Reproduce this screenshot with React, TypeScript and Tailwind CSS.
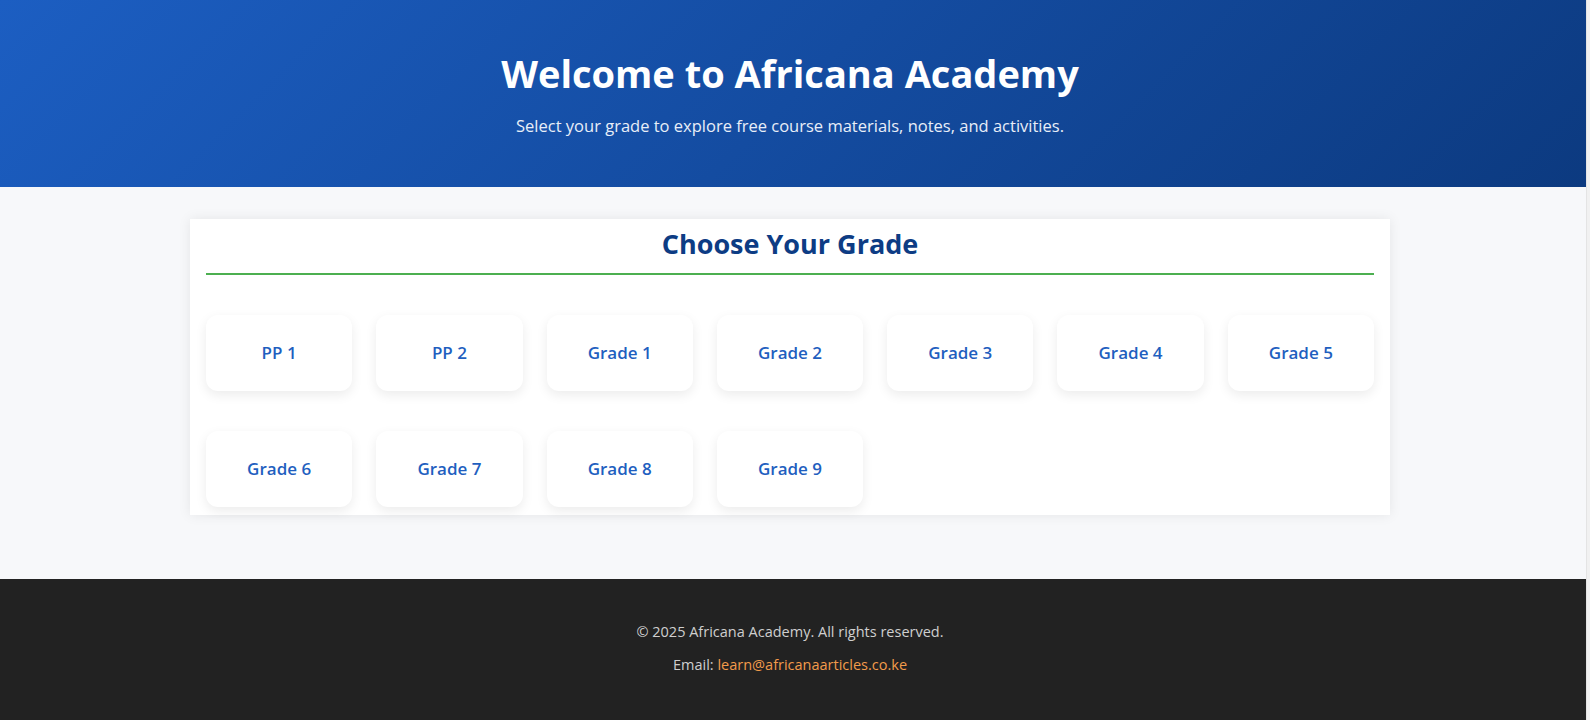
const grades = [
  "PP 1",
  "PP 2",
  "Grade 1",
  "Grade 2",
  "Grade 3",
  "Grade 4",
  "Grade 5",
  "Grade 6",
  "Grade 7",
  "Grade 8",
  "Grade 9",
];

function Hero() {
  return (
    <header className="flex h-[187px] flex-col items-center bg-[linear-gradient(135deg,#1c5ec2,#0c3a80)] pr-[6px] pt-[46px] text-white">
      <h1 className="text-[38px] font-bold leading-[54px]">
        Welcome to Africana Academy
      </h1>
      <p className="mt-[14px] text-[16.5px] leading-[24px] text-[#e8eef8]">
        Select your grade to explore free course materials, notes, and
        activities.
      </p>
    </header>
  );
}

function GradeGrid() {
  return (
    <section className="mx-auto w-[1200px] bg-white px-4 pb-2 pt-[5px] shadow-[0_0_12px_rgba(0,0,0,0.08)]">
      <h2 className="text-center text-[27px] font-bold leading-[40px] text-[#0d3c84]">
        Choose Your Grade
      </h2>
      <div className="mt-[9px] h-[2px] bg-[#4caf50]" />
      <div className="mt-[40px] grid grid-cols-7 gap-x-6 gap-y-10">
        {grades.map((grade) => (
          <button
            key={grade}
            className="flex h-[76px] items-center justify-center rounded-xl bg-white text-[17px] font-semibold text-[#1f5fbf] shadow-[0_4px_12px_rgba(0,0,0,0.08)]"
          >
            {grade}
          </button>
        ))}
      </div>
    </section>
  );
}

function Footer() {
  return (
    <footer className="flex h-[141px] flex-col items-center bg-[#222222] pr-[6px] pt-[36px] text-[14.5px] leading-[33px] text-[#cfcfcf]">
      <p>© 2025 Africana Academy. All rights reserved.</p>
      <p>
        Email:{" "}
        <a href="mailto:learn@africanaarticles.co.ke" className="text-[#f29b4b]">
          learn@africanaarticles.co.ke
        </a>
      </p>
    </footer>
  );
}

export default function App() {
  return (
    <div className="flex min-h-screen font-['Open_Sans',sans-serif]">
      <div className="flex w-[1586px] flex-col">
        <Hero />
        <main className="bg-[#f7f8fa] pb-16 pr-[6px] pt-8">
          <GradeGrid />
        </main>
        <Footer />
      </div>
      <div className="w-[4px] border-l border-[#e4e4e4] bg-[#f1f1f1]" />
    </div>
  );
}
